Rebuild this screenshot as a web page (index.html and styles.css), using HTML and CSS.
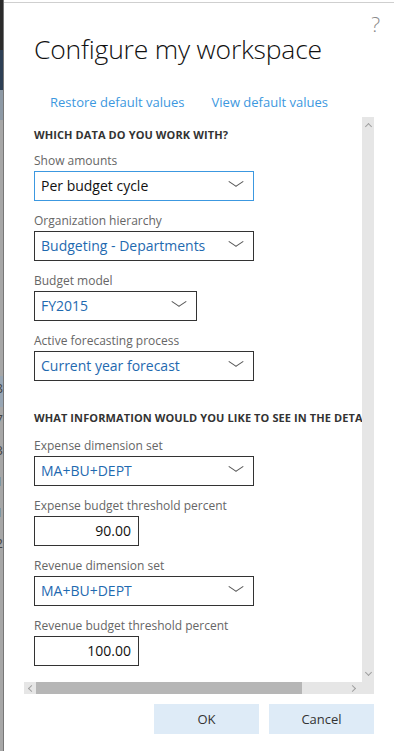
FILE: index.html
```html
<!DOCTYPE html>
<html lang="en">

<head>
  <meta charset="UTF-8">
  <title>Configure my workspace</title>
  <link rel="stylesheet" href="styles.css">
</head>

<body>
  <!-- page behind the dialog -->
  <div class="backdrop">
    <div class="bd-dark"></div>
    <div class="bd-navy"></div>
    <div class="bd-steel"></div>
    <div class="bd-gray">
      <span class="bd-row bd-hl">8</span>
      <span class="bd-row">7</span>
      <span class="bd-row">3</span>
      <span class="bd-row">1</span>
      <span class="bd-row">1</span>
      <span class="bd-row">2</span>
    </div>
  </div>

  <!-- dialog -->
  <div class="dialog">
    <div class="help">?</div>
    <h1 class="title">Configure my workspace</h1>

    <div class="links">
      <a href="javascript:;">Restore default values</a>
      <a href="javascript:;">View default values</a>
    </div>

    <div class="panel">
      <div class="content">
        <h2 class="heading">Which data do you work with?</h2>

        <div class="field">
          <label>Show amounts</label>
          <div class="select wide focus plain">Per budget cycle<i class="chev"></i></div>
        </div>
        <div class="field">
          <label>Organization hierarchy</label>
          <div class="select wide">Budgeting - Departments<i class="chev"></i></div>
        </div>
        <div class="field">
          <label>Budget model</label>
          <div class="select mid">FY2015<i class="chev"></i></div>
        </div>
        <div class="field">
          <label>Active forecasting process</label>
          <div class="select wide">Current year forecast<i class="chev"></i></div>
        </div>

        <h2 class="heading second">What information would you like to see in the details?</h2>

        <div class="field">
          <label>Expense dimension set</label>
          <div class="select wide">MA+BU+DEPT<i class="chev"></i></div>
        </div>
        <div class="field">
          <label>Expense budget threshold percent</label>
          <div class="number">90.00</div>
        </div>
        <div class="field">
          <label>Revenue dimension set</label>
          <div class="select wide">MA+BU+DEPT<i class="chev"></i></div>
        </div>
        <div class="field">
          <label>Revenue budget threshold percent</label>
          <div class="number">100.00</div>
        </div>
      </div>

      <!-- scrollbars -->
      <div class="vbar">
        <span class="arrow up"></span>
        <span class="arrow down"></span>
      </div>
      <div class="hbar">
        <span class="arrow left"></span>
        <span class="thumb"></span>
        <span class="arrow right"></span>
      </div>
      <div class="corner"></div>
    </div>

    <div class="actions">
      <button class="btn">OK</button>
      <button class="btn">Cancel</button>
    </div>
  </div>
</body>

</html>
```

FILE: styles.css
```css
* {
  margin: 0;
  padding: 0;
  box-sizing: border-box;
}

body {
  width: 394px;
  height: 751px;
  overflow: hidden;
  display: flex;
  font-family: "Open Sans", "Noto Sans", sans-serif;
  background: #fff;
}

/* 对话框后面的页面 */
.backdrop {
  width: 4px;
  display: flex;
  flex-direction: column;
  overflow: hidden;
  border-right: 1px solid #777;
}
.bd-dark {
  height: 50px;
  background: #2b2b2b;
}
.bd-navy {
  height: 40px;
  background: #2e3f55;
}
.bd-steel {
  height: 30px;
  background: #8d99a5;
}
.bd-gray {
  flex: 1;
  background: #a7a7a7;
  padding-top: 256px;
  display: flex;
  flex-direction: column;
  align-items: flex-end;
}
.bd-row {
  display: flex;
  justify-content: flex-end;
  width: 4px;
  height: 31px;
  font-size: 13px;
  line-height: 24px;
  color: #444;
  overflow: hidden;
}
.bd-hl {
  background: #98a6b4;
}

/* 对话框 */
.dialog {
  flex: 1;
  border-top: 1px solid #cfcfcf;
  margin-top: 2px;
  padding: 0 20px 0 20px;
  display: flex;
  flex-direction: column;
  position: relative;
}
.help {
  position: absolute;
  top: 7px;
  right: 14px;
  font-size: 21px;
  font-weight: 300;
  color: #8a8a8a;
}
.title {
  margin: 29px 0 0 10px;
  font-size: 26.5px;
  font-weight: 300;
  color: #111;
  line-height: 34px;
  letter-spacing: -0.2px;
}
.links {
  display: flex;
  gap: 27px;
  margin: 27px 0 0 26px;
}
.links a {
  color: #3c98e0;
  text-decoration: none;
  font-size: 13px;
  line-height: 18px;
}

/* 滚动区域 */
.panel {
  margin-top: 6px;
  width: 350px;
  height: 577px;
  display: grid;
  grid-template-columns: 338px 12px;
  grid-template-rows: 565px 12px;
}
.content {
  overflow: hidden;
  padding: 10px 0 0 10px;
  white-space: nowrap;
}
.heading {
  font-size: 11px;
  line-height: 16px;
  font-weight: 700;
  color: #333;
  text-transform: uppercase;
  letter-spacing: 0.1px;
  margin-bottom: 10px;
}
.heading.second {
  margin-top: 29px;
  margin-bottom: 12px;
}
.field {
  margin-bottom: 12px;
}
.field label {
  display: block;
  font-size: 12px;
  line-height: 16px;
  color: #666;
  margin-bottom: 2px;
}
.select {
  height: 30px;
  border: 1px solid #333;
  display: flex;
  align-items: center;
  padding: 0 0 1px 6px;
  font-size: 14px;
  color: #1f6ab0;
  position: relative;
}
.select.wide {
  width: 220px;
}
.select.mid {
  width: 163px;
}
.select.focus {
  border-color: #3c98e0;
}
.select.plain {
  color: #111;
}
.chev {
  position: absolute;
  right: 10px;
  top: 9px;
  width: 14px;
  height: 8px;
}
.chev::before,
.chev::after {
  content: "";
  position: absolute;
  top: 0;
  width: 9px;
  height: 1px;
  background: #555;
}
.chev::before {
  left: 0;
  transform: rotate(34deg);
  transform-origin: 0 0;
}
.chev::after {
  right: 0;
  transform: rotate(-34deg);
  transform-origin: 100% 0;
}
.number {
  width: 105px;
  height: 30px;
  border: 1px solid #333;
  display: flex;
  align-items: center;
  justify-content: flex-end;
  padding: 0 7px 1px 0;
  font-size: 14px;
  color: #111;
}

/* 滚动条 */
.vbar,
.hbar,
.corner {
  background: #e6e6e6;
}
.vbar {
  display: flex;
  flex-direction: column;
  justify-content: space-between;
  align-items: center;
  padding: 4px 0;
}
.hbar {
  display: flex;
  align-items: center;
}
.hbar .thumb {
  width: 266px;
  height: 12px;
  background: #b6b6b6;
}
.hbar .arrow.left {
  width: 12px;
}
.hbar .arrow.right {
  margin-left: auto;
  width: 12px;
  margin-right: 1px;
}
.arrow {
  display: block;
  position: relative;
  width: 8px;
  height: 8px;
}
.arrow::before {
  content: "";
  position: absolute;
  width: 4px;
  height: 4px;
  border-left: 1px solid #a0a0a0;
  border-top: 1px solid #a0a0a0;
  left: 2px;
  top: 2px;
}
.arrow.up::before {
  transform: rotate(45deg);
  top: 3px;
}
.arrow.down::before {
  transform: rotate(225deg);
  top: 0;
}
.arrow.left::before {
  transform: rotate(-45deg);
  left: 5px;
}
.arrow.right::before {
  transform: rotate(135deg);
  left: 1px;
}

/* 按钮 */
.actions {
  display: flex;
  justify-content: flex-end;
  gap: 10px;
  margin-top: 10px;
}
.btn {
  width: 105px;
  height: 30px;
  border: none;
  background: #deebf7;
  font-family: inherit;
  font-size: 13px;
  color: #333;
}
```
